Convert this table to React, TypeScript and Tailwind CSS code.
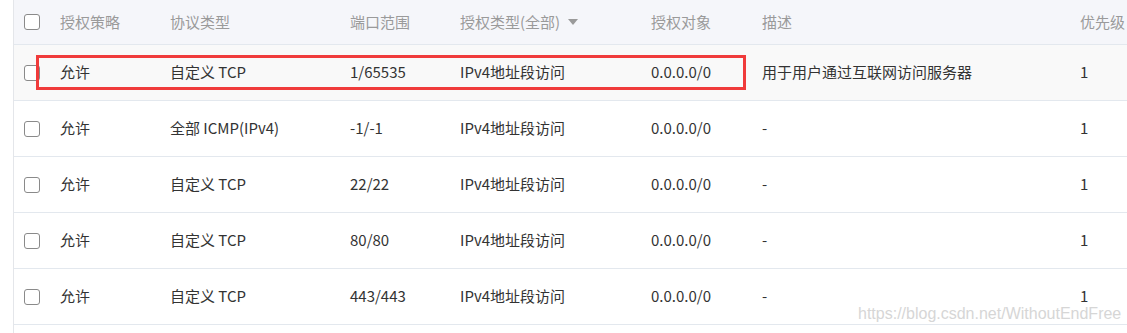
import React from "react";

type Rule = {
  policy: string;
  protocol: string;
  port: string;
  authType: string;
  target: string;
  desc: string;
  priority: string;
};

const rules: Rule[] = [
  { policy: "允许", protocol: "自定义 TCP", port: "1/65535", authType: "IPv4地址段访问", target: "0.0.0.0/0", desc: "用于用户通过互联网访问服务器", priority: "1" },
  { policy: "允许", protocol: "全部 ICMP(IPv4)", port: "-1/-1", authType: "IPv4地址段访问", target: "0.0.0.0/0", desc: "-", priority: "1" },
  { policy: "允许", protocol: "自定义 TCP", port: "22/22", authType: "IPv4地址段访问", target: "0.0.0.0/0", desc: "-", priority: "1" },
  { policy: "允许", protocol: "自定义 TCP", port: "80/80", authType: "IPv4地址段访问", target: "0.0.0.0/0", desc: "-", priority: "1" },
  { policy: "允许", protocol: "自定义 TCP", port: "443/443", authType: "IPv4地址段访问", target: "0.0.0.0/0", desc: "-", priority: "1" },
];

const cols = "grid grid-cols-[46px_110px_180px_110px_191px_111px_318px_1fr] items-center";

function Checkbox() {
  return <span className="block w-4 h-4 rounded-[3px] border border-[#8a8a8a] bg-white" />;
}

export default function App() {
  return (
    <div
      className="relative w-[1127px] h-[333px] bg-white overflow-hidden pl-[13px] text-[15px] text-[#333]"
      style={{ fontFamily: '"Noto Sans CJK SC", "Noto Sans", sans-serif' }}
    >
      <div className="h-full border-l border-[#e4e6ea]">
        {/* header */}
        <div className={`${cols} h-[45px] bg-[#f5f6fa] border-b border-[#e3e8ee] text-[#9a9a9a]`}>
          <div className="pl-[10px]">
            <Checkbox />
          </div>
          <div>授权策略</div>
          <div>协议类型</div>
          <div>端口范围</div>
          <div className="flex items-center">
            授权类型(全部)
            <svg className="ml-[8px]" width="10" height="6" viewBox="0 0 10 6">
              <path d="M0 0h10L5 6z" fill="#9a9a9a" />
            </svg>
          </div>
          <div>授权对象</div>
          <div>描述</div>
          <div className="whitespace-nowrap">优先级</div>
        </div>

        {rules.map((r, i) => (
          <div
            key={i}
            className={`${cols} h-[56px] border-b border-[#e3e8ee] ${i === 0 ? "bg-[#f9f9f9]" : ""}`}
          >
            <div className="pl-[10px]">
              <Checkbox />
            </div>
            <div>{r.policy}</div>
            <div>{r.protocol}</div>
            <div>{r.port}</div>
            <div>{r.authType}</div>
            <div>{r.target}</div>
            <div>{r.desc}</div>
            <div>{r.priority}</div>
          </div>
        ))}
      </div>

      {/* highlight box */}
      <div className="absolute left-[36px] top-[55px] w-[710px] h-[35px] border-[3px] border-[#f03b3b]" />

      {/* watermark */}
      <div
        className="absolute left-[858px] top-[302px] text-[16px] text-[#d6d6d6] whitespace-nowrap"
        style={{ fontFamily: '"Liberation Sans", Arial, sans-serif' }}
      >
        https://blog.csdn.net/WithoutEndFree
      </div>
    </div>
  );
}
